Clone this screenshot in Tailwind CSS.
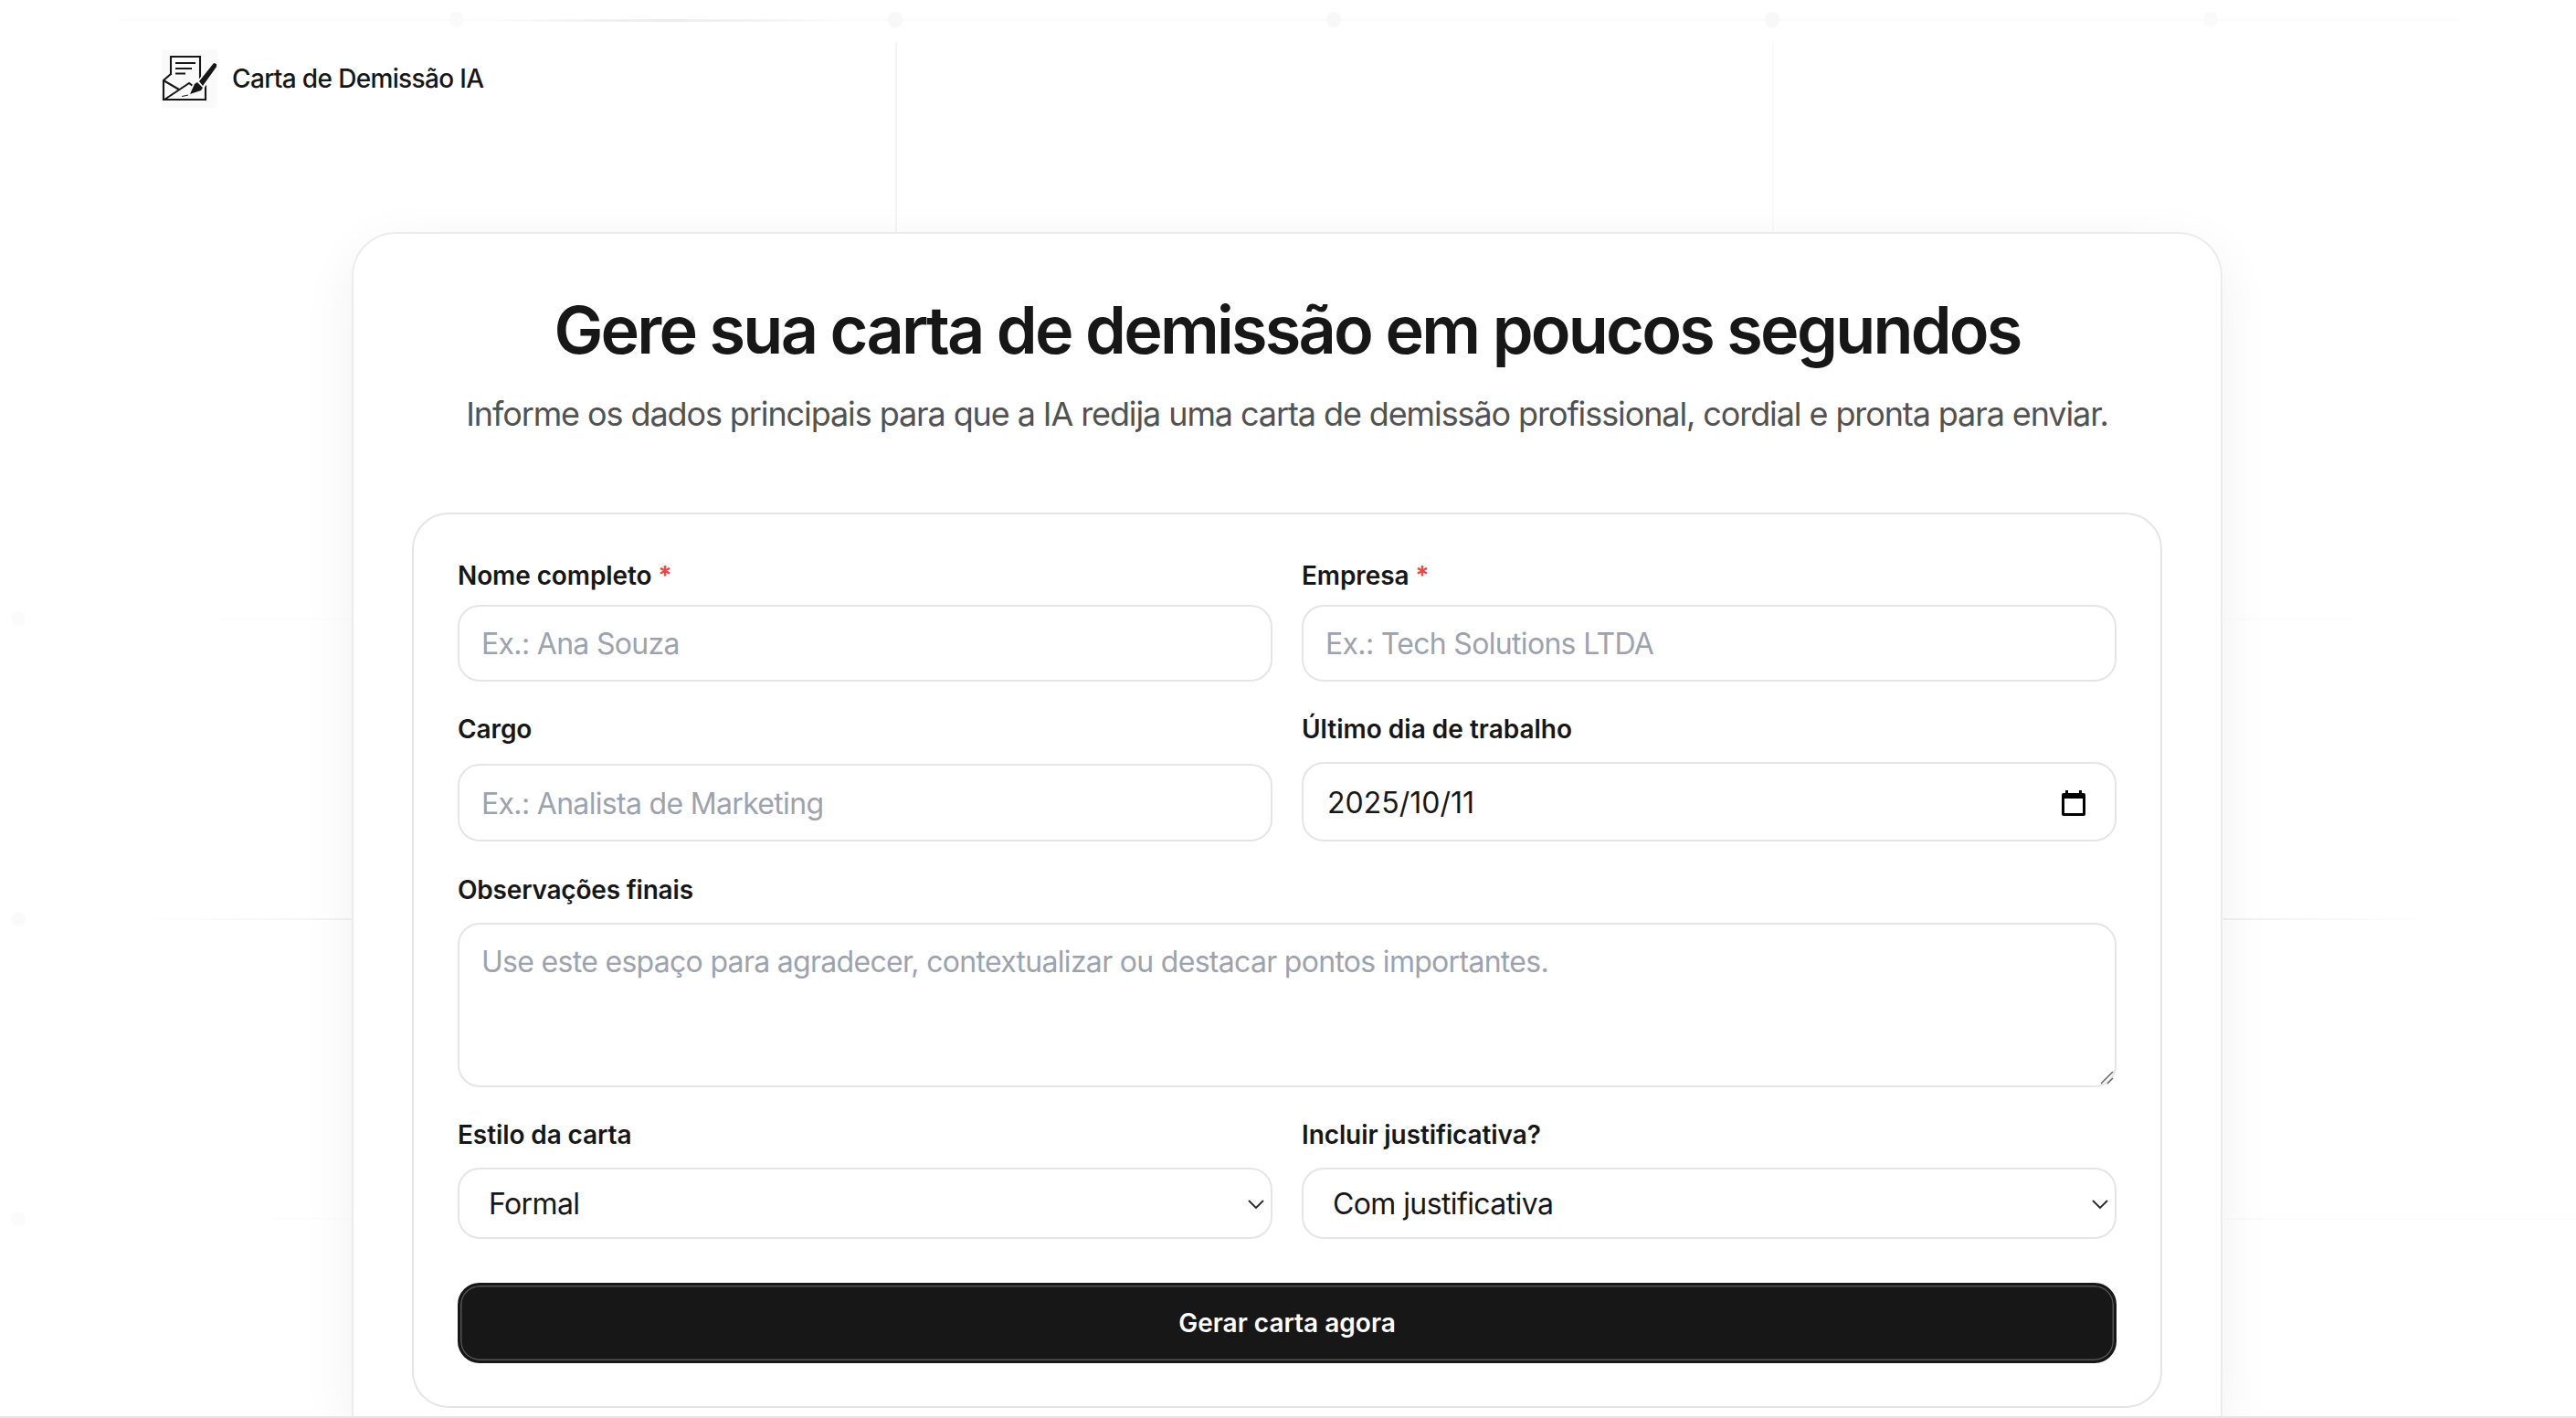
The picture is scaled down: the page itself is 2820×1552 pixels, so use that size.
<!DOCTYPE html>
<html lang="pt-BR">
<head>
    <meta charset="UTF-8">
    <title>Carta de Demissão IA</title>
    <script src="https://cdn.jsdelivr.net/npm/@tailwindcss/browser@4"></script>
</head>

<body class="relative h-[1552px] overflow-hidden bg-white font-['Inter',sans-serif] text-[#171717] antialiased">

    <!-- faint background grid -->
    <div class="absolute inset-0 pointer-events-none">
        <div class="absolute left-[130px] top-[21px] h-[2px] w-[2560px] bg-[#fbfbfb]"></div>
        <div class="absolute left-[540px] top-[21px] h-[3px] w-[380px] bg-linear-to-r from-transparent via-[#ececec] to-transparent"></div>
        <div class="absolute left-[492px] top-[13px] h-[17px] w-[16px] rounded-full bg-[#fafafa]"></div>
        <div class="absolute left-[972px] top-[13px] h-[17px] w-[16px] rounded-full bg-[#f8f8f8]"></div>
        <div class="absolute left-[1452px] top-[13px] h-[17px] w-[16px] rounded-full bg-[#f8f8f8]"></div>
        <div class="absolute left-[1932px] top-[13px] h-[17px] w-[16px] rounded-full bg-[#f8f8f8]"></div>
        <div class="absolute left-[2412px] top-[13px] h-[17px] w-[16px] rounded-full bg-[#fafafa]"></div>
        <div class="absolute left-[980px] top-[46px] h-[210px] w-[2px] bg-[#f4f4f4]"></div>
        <div class="absolute left-[1940px] top-[46px] h-[210px] w-[2px] bg-[#fafafa]"></div>
        <div class="absolute left-[12px] top-[669px] h-[16px] w-[16px] rounded-full bg-[#fbfbfb]"></div>
        <div class="absolute left-[12px] top-[998px] h-[16px] w-[16px] rounded-full bg-[#fafafa]"></div>
        <div class="absolute left-[12px] top-[1326px] h-[16px] w-[16px] rounded-full bg-[#fbfbfb]"></div>
        <div class="absolute left-[240px] top-[677px] h-[2px] w-[146px] bg-[#fcfcfc]"></div>
        <div class="absolute left-[150px] top-[1005px] h-[2px] w-[236px] bg-linear-to-r from-transparent to-[#f2f2f2]"></div>
        <div class="absolute left-[300px] top-[1333px] h-[2px] w-[86px] bg-[#fcfcfc]"></div>
        <div class="absolute left-[2434px] top-[677px] h-[2px] w-[140px] bg-[#fcfcfc]"></div>
        <div class="absolute left-[2434px] top-[1005px] h-[2px] w-[230px] bg-linear-to-r from-[#f0f0f0] to-transparent"></div>
        <div class="absolute left-[2434px] top-[1333px] h-[2px] w-[386px] bg-[#fbfbfb]"></div>
    </div>

    <header class="relative flex items-center gap-[16px] pl-[177px] pt-[54px]">
        <svg class="h-[64px] w-[61px] bg-[#fafafa]" viewBox="0 0 61 64" fill="none" stroke="#171717" stroke-width="2.100">
            <path d="M10 28V8h32v26"/>
            <path d="M15 15h22M15 21h18M15 26.500h11" stroke-width="2"/>
            <path d="M10 27l-8 7v21h46V38" />
            <path d="M2 34l17 10M3 55l24-16 3-2 8 6"/>
            <path d="M22 51.500l10-2" stroke-width="1"/>
            <path fill="#fafafa" stroke="#fafafa" stroke-width="3" d="M31 49l5-12 4-1 17-21 3 1v3L45 42l-2 3z"/>
            <path fill="#171717" stroke="none" d="M31 49l5-11 3-2 6 6-2 3zM41 35l16-20 3 1v3L45 40z"/>
        </svg>
        <span class="text-[28px] font-medium tracking-[-0.65px]">Carta de Demissão IA</span>
    </header>

    <main class="relative ml-[385px] mt-[136px] h-[1298px] w-[2048px] rounded-t-[48px] border-2 border-b-0 border-[#ececec] bg-white px-[64px] pt-[61px] shadow-[0_16px_60px_rgba(0,0,0,0.06)]">
        <h1 class="text-center text-[72px] leading-[88px] font-semibold tracking-[-2.8px] whitespace-nowrap">Gere sua carta de demissão em poucos segundos</h1>
        <p class="mt-[20px] text-center text-[36px] leading-[56px] tracking-[-1.1px] text-[#525252] whitespace-nowrap">Informe os dados principais para que a IA redija uma carta de demissão profissional, cordial e pronta para enviar.</p>

        <form class="mt-[80px] h-[980px] rounded-[40px] border-2 border-[#e5e5e5] px-[48px] pt-[48px]">
            <div class="grid grid-cols-2 gap-x-[32px]">
                <div class="h-[172px]">
                    <label class="block h-[51px] text-[28px] leading-[39px] font-semibold tracking-[-0.1px]">Nome completo <span class="text-[#ef4444]">*</span></label>
                    <input class="h-[84px] w-full rounded-[24px] border-2 border-[#e5e5e5] px-[24px] text-[32px] tracking-[-0.68px] placeholder:text-[#9ca3af]" placeholder="Ex.: Ana Souza">
                </div>
                <div class="h-[172px]">
                    <label class="block h-[51px] text-[28px] leading-[39px] font-semibold tracking-[-0.1px]">Empresa <span class="text-[#ef4444]">*</span></label>
                    <input class="h-[84px] w-full rounded-[24px] border-2 border-[#e5e5e5] px-[24px] text-[32px] tracking-[-0.68px] placeholder:text-[#9ca3af]" placeholder="Ex.: Tech Solutions LTDA">
                </div>
                <div class="h-[176px]">
                    <label class="block h-[51px] text-[28px] leading-[30px] font-semibold tracking-[-0.1px]">Cargo</label>
                    <input class="mt-[2px] h-[85px] w-full rounded-[24px] border-2 border-[#e5e5e5] px-[24px] pt-[2px] text-[32px] tracking-[-0.68px] placeholder:text-[#9ca3af]" placeholder="Ex.: Analista de Marketing">
                </div>
                <div class="h-[176px]">
                    <label class="block h-[51px] text-[28px] leading-[30px] font-semibold">Último dia de trabalho</label>
                    <div class="flex h-[87px] items-center justify-between rounded-[24px] border-2 border-[#e5e5e5] pl-[26px] pr-[31px] pt-[2px] text-[32px]">
                        <span>2025/10/11</span>
                        <svg class="size-[28px]" viewBox="0 0 28 28" fill="none"><path fill="#000" d="M5 0h3v3h12V0h3v3h2a2 2 0 0 1 2 2v21a2 2 0 0 1-2 2H3a2 2 0 0 1-2-2V5a2 2 0 0 1 2-2h2zM4 9v16h20V9z"/></svg>
                    </div>
                </div>
            </div>
            <div class="h-[268px]">
                <label class="block h-[51px] text-[28px] leading-[30px] font-semibold tracking-[-0.2px]">Observações finais</label>
                <div class="relative h-[180px]">
                    <textarea class="h-full w-full resize-none rounded-[24px] border-2 border-[#e5e5e5] px-[24px] py-[19px] text-[32px] leading-[44px] tracking-[-0.7px] placeholder:text-[#9ca3af]" placeholder="Use este espaço para agradecer, contextualizar ou destacar pontos importantes."></textarea>
                    <svg class="absolute bottom-[2px] right-[2px] size-[16px]" viewBox="0 0 16 16" stroke="#666" stroke-width="1.500"><path d="M1 14L14 1M8 14l6-6"/></svg>
                </div>
            </div>
            <div class="grid grid-cols-2 gap-x-[32px]">
                <div>
                    <label class="block h-[51px] text-[28px] leading-[30px] font-semibold tracking-[-0.1px]">Estilo da carta</label>
                    <div class="flex h-[78px] items-center justify-between rounded-[24px] border-2 border-[#e5e5e5] pl-[32px] pr-[7px] pt-[2px] text-[32px] tracking-[-0.6px]">
                        <span>Formal</span>
                        <svg class="h-[11px] w-[18px]" viewBox="0 0 18 11" fill="none" stroke="#262626" stroke-width="1.800"><path d="M1 1l8 8 8-8"/></svg>
                    </div>
                </div>
                <div>
                    <label class="block h-[51px] text-[28px] leading-[30px] font-semibold tracking-[-0.1px]">Incluir justificativa?</label>
                    <div class="flex h-[78px] items-center justify-between rounded-[24px] border-2 border-[#e5e5e5] pl-[32px] pr-[7px] pt-[2px] text-[32px] tracking-[-0.6px]">
                        <span>Com justificativa</span>
                        <svg class="h-[11px] w-[18px]" viewBox="0 0 18 11" fill="none" stroke="#262626" stroke-width="1.800"><path d="M1 1l8 8 8-8"/></svg>
                    </div>
                </div>
            </div>
            <button type="button" class="mt-[48px] h-[88px] w-full rounded-[24px] border-[3px] border-[#171717] bg-[#171717] text-[28px] font-semibold text-white shadow-[inset_0_0_0_1.5px_#555555]">Gerar carta agora</button>
        </form>
    </main>

    <div class="absolute bottom-0 left-0 h-[2px] w-full bg-[#e5e5e5]"></div>
</body>
</html>
